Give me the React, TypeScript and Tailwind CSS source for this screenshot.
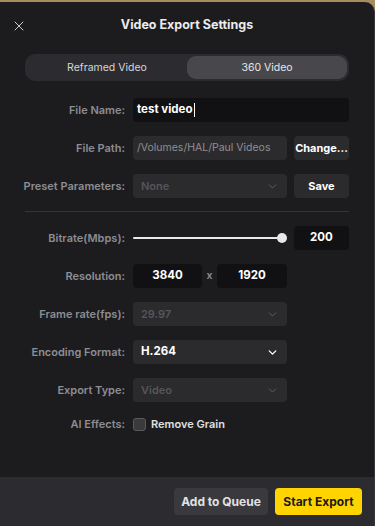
import { X, ChevronDown } from "lucide-react"

const font = { fontFamily: "Inter, 'Noto Sans', sans-serif" }

function Label({ text }: { text: string }) {
    return <div className="w-[125px] shrink-0 text-right text-[11px] font-semibold text-[#8d8d92]">{text}</div>
}

function Select({ value, disabled }: { value: string, disabled?: boolean }) {
    return (
        <div className="flex h-6 w-[154px] items-center justify-between rounded-[4px] bg-[#2b2b2e] pl-2 pr-2">
            <span className={disabled ? "text-[11px] font-semibold text-[#55555a]" : "text-[11.5px] font-bold text-white"}>{value}</span>
            <ChevronDown size={13} strokeWidth={disabled ? 1.5 : 2.5} className={disabled ? "text-[#6a6a6e]" : "text-white"} />
        </div>
    )
}

export default function App() {
    return (
        <div className="h-[526px] w-[375px] bg-[#a88c5f] pt-[2px]" style={font}>
            <div className="flex h-[524px] flex-col overflow-hidden rounded-tr-[10px] border-r border-[#38383b] bg-[#1c1c1f]">
                <div className="relative flex h-[46px] items-center justify-center">
                    <X size={16} strokeWidth={1.5} className="absolute left-[11px] top-[16px] text-[#d0d0d2]" />
                    <span className="mt-[1px] text-[12.5px] font-bold text-[#ececee]">Video Export Settings</span>
                </div>
                <div className="mx-[25px] mt-[6px] flex h-[27px] items-center rounded-[10px] bg-[#2c2c30] p-[2px]">
                    <div className="flex h-full flex-1 items-center justify-center text-[10.5px] text-[#d6d6d8]">Reframed Video</div>
                    <div className="flex h-full flex-1 items-center justify-center rounded-[9px] bg-[#48484c] text-[10.5px] text-[#e6e6e8]">360 Video</div>
                </div>

                <div className="mt-[17px] flex flex-col gap-[14px]">
                    <div className="flex h-6 items-center gap-2">
                        <Label text="File Name:" />
                        <div className="flex h-6 w-[216px] items-center rounded-[4px] bg-[#111113] pl-[4px] text-[11.5px] font-bold text-white">
                            test video<span className="ml-[1px] h-[14px] w-px bg-white" />
                        </div>
                    </div>
                    <div className="flex h-6 items-center gap-2">
                        <Label text="File Path:" />
                        <div className="flex h-6 w-[154px] items-center rounded-[4px] bg-[#2b2b2e] pl-[4px] text-[10.5px] text-[#8f8f94]">/Volumes/HAL/Paul Videos</div>
                        <div className="-ml-[1px] flex h-6 w-[55px] items-center justify-center rounded-[4px] bg-[#2b2b2e] text-[11px] font-bold text-white">Change...</div>
                    </div>
                    <div className="flex h-6 items-center gap-2">
                        <Label text="Preset Parameters:" />
                        <Select value="None" disabled />
                        <div className="-ml-[1px] flex h-6 w-[55px] items-center justify-center rounded-[4px] bg-[#2b2b2e] text-[11px] font-bold text-white">Save</div>
                    </div>
                </div>

                <div className="mx-[25px] mt-[13px] h-px bg-[#343437]" />

                <div className="mt-[14px] flex flex-col gap-[14px]">
                    <div className="flex h-6 items-center gap-2">
                        <Label text="Bitrate(Mbps):" />
                        <div className="relative flex h-6 w-[154px] items-center">
                            <div className="h-[2px] w-[150px] rounded-full bg-[#e8e8ea]" />
                            <div className="absolute left-[144px] top-[7px] h-[10px] w-[10px] rounded-full bg-[#e8e8ea]" />
                        </div>
                        <div className="-ml-[1px] flex h-6 w-[55px] items-center justify-center rounded-[4px] bg-[#111113] text-[11.5px] font-bold text-white">200</div>
                    </div>
                    <div className="flex h-6 items-center gap-2">
                        <Label text="Resolution:" />
                        <div className="flex items-center">
                            <div className="flex h-6 w-[69px] items-center justify-center rounded-[4px] bg-[#111113] text-[11.5px] font-bold text-white">3840</div>
                            <span className="w-[15px] text-center text-[10.5px] font-semibold text-[#8d8d92]">x</span>
                            <div className="flex h-6 w-[70px] items-center justify-center rounded-[4px] bg-[#111113] text-[11.5px] font-bold text-white">1920</div>
                        </div>
                    </div>
                    <div className="flex h-6 items-center gap-2">
                        <Label text="Frame rate(fps):" />
                        <Select value="29.97" disabled />
                    </div>
                    <div className="flex h-6 items-center gap-2">
                        <Label text="Encoding Format:" />
                        <Select value="H.264" />
                    </div>
                    <div className="flex h-6 items-center gap-2">
                        <Label text="Export Type:" />
                        <Select value="Video" disabled />
                    </div>
                    <div className="-mt-[2px] flex h-5 items-center gap-2">
                        <Label text="AI Effects:" />
                        <div className="h-[13px] w-[13px] rounded-[3px] border border-[#5a5a5e] bg-[#3a3a3d]" />
                        <span className="-ml-[3px] text-[11px] font-semibold text-[#e0e0e2]">Remove Grain</span>
                    </div>
                </div>

                <div className="mt-auto flex h-[49px] items-center justify-end gap-[7px] bg-[#2c2c30] pr-[12px]">
                    <div className="flex h-[27px] w-[94px] items-center justify-center rounded-[4px] bg-[#3a3a3e] text-[12px] font-bold text-[#e2e2e4]">Add to Queue</div>
                    <div className="flex h-[27px] w-[87px] items-center justify-center rounded-[4px] bg-[#ffd400] text-[12px] font-bold text-[#1a1a1a]">Start Export</div>
                </div>
            </div>
        </div>
    )
}
